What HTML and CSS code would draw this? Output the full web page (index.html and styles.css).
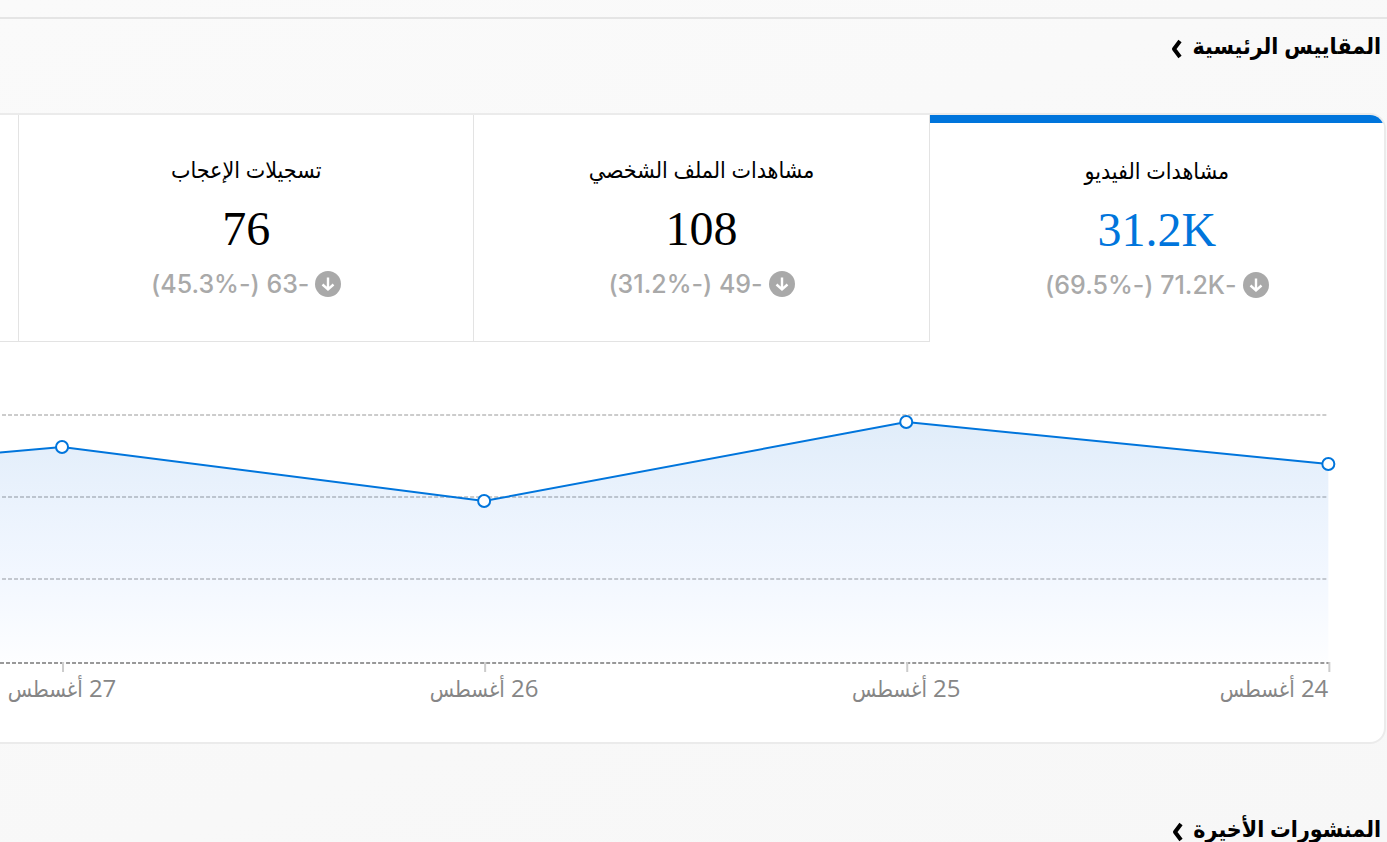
FILE: index.html
```
<!DOCTYPE html>
<html lang="ar" dir="rtl">
  <head>
    <meta charset="utf-8" />
    <meta name="viewport" content="width=device-width, initial-scale=1" />
    <title>المقاييس الرئيسية</title>
    <link rel="stylesheet" href="styles.css">
  </head>
  <body>
    <header class="topbar"></header>

    <main>
      <h2 class="section-title">
        <a href="#metrics">
          المقاييس الرئيسية
          <svg class="chevron" viewBox="0 0 12 20"><path d="M10 2 L4 10 L10 18" /></svg>
        </a>
      </h2>

      <section class="card" id="metrics">
        <div class="tabs">
          <button type="button" class="tab active">
            <span class="name">مشاهدات الفيديو</span>
            <span class="value">31.2K</span>
            <span class="change">
              <svg class="arrow" viewBox="0 0 26 26"><circle cx="13" cy="13" r="13" /><path d="M13 6.5 V18 M7.5 13.5 L13 18.5 L18.5 13.5" /></svg>
              <span>-71.2K&rlm; (-69.5%)</span>
            </span>
          </button>
          <button type="button" class="tab">
            <span class="name">مشاهدات الملف الشخصي</span>
            <span class="value">108</span>
            <span class="change">
              <svg class="arrow" viewBox="0 0 26 26"><circle cx="13" cy="13" r="13" /><path d="M13 6.5 V18 M7.5 13.5 L13 18.5 L18.5 13.5" /></svg>
              <span>-49 (-31.2%)</span>
            </span>
          </button>
          <button type="button" class="tab">
            <span class="name">تسجيلات الإعجاب</span>
            <span class="value">76</span>
            <span class="change">
              <svg class="arrow" viewBox="0 0 26 26"><circle cx="13" cy="13" r="13" /><path d="M13 6.5 V18 M7.5 13.5 L13 18.5 L18.5 13.5" /></svg>
              <span>-63 (-45.3%)</span>
            </span>
          </button>
          <button type="button" class="tab"></button>
        </div>

        <div class="chart">
          <svg viewBox="0 0 1328 370">
            <defs>
              <linearGradient id="fill" x1="0" y1="80" x2="0" y2="320" gradientUnits="userSpaceOnUse">
                <stop offset="0" stop-color="#0066d0" stop-opacity="0.12" />
                <stop offset="0.65" stop-color="#2f80ff" stop-opacity="0.06" />
                <stop offset="1" stop-color="#2f80ff" stop-opacity="0.01" />
              </linearGradient>
            </defs>
            <path class="grid" d="M2 73 H1326 M2 155 H1326 M2 237 H1326" />
            <path class="area" d="M-360 143 L62 105 L484 159 L906 80 L1328 122 V321 H-360 Z" />
            <path class="axis" d="M0 321 H1329" />
            <path class="ticks" d="M63 320 V330 M485 320 V330 M907 320 V330 M1329 320 V330" />
            <path class="line" d="M-360 143 L62 105 L484 159 L906 80 L1328 122" />
            <circle class="point" cx="62" cy="105" r="6" />
            <circle class="point" cx="484" cy="159" r="6" />
            <circle class="point" cx="906" cy="80" r="6" />
            <circle class="point" cx="1328" cy="122" r="6" />
            <text class="day" x="62" y="355">27 <tspan class="month">أغسطس</tspan></text>
            <text class="day" x="484" y="355">26 <tspan class="month">أغسطس</tspan></text>
            <text class="day" x="906" y="355">25 <tspan class="month">أغسطس</tspan></text>
            <text class="day first" x="1328" y="355">24 <tspan class="month">أغسطس</tspan></text>
          </svg>
        </div>
      </section>

      <h2 class="section-title">
        <a href="#posts">
          المنشورات الأخيرة
          <svg class="chevron" viewBox="0 0 12 20"><path d="M10 2 L4 10 L10 18" /></svg>
        </a>
      </h2>
    </main>
  </body>
</html>
```
FILE: styles.css
```
* {
  box-sizing: border-box;
}

html,
body {
  overflow: hidden;
}

body {
  margin: 0;
  height: 100vh;
  background: linear-gradient(160deg, #fafafa, #f7f7f7);
  color: #000;
  font-family: "Liberation Serif", "DejaVu Sans Condensed", "DejaVu Sans", serif;
}

.topbar {
  height: 19px;
  border-bottom: 2px solid #e5e5e5;
}

main {
  padding-right: 1px;
}

/* Section headings */
.section-title {
  margin: 0;
  padding: 8px 5px 46px 0;
  font-size: 23px;
  line-height: 40px;
}

.section-title a {
  display: flex;
  align-items: center;
  gap: 10px;
  width: fit-content;
  color: inherit;
  text-decoration: none;
}

.chevron {
  width: 12px;
  height: 20px;
  margin-top: 4px;
  fill: none;
  stroke: #000;
  stroke-width: 4;
  stroke-linejoin: round;
}

/* The card is wider than the window and runs off its left side */
.card {
  width: 131.6vw;
  margin-bottom: 58px;
  border: 2px solid #ebebeb;
  border-radius: 16px;
  background: #fff;
  overflow: hidden;
}

.tabs {
  display: grid;
  grid-template-columns: repeat(4, 1fr);
}

.tab {
  display: flex;
  flex-direction: column;
  align-items: center;
  min-height: 227px;
  padding: 36px 0 0;
  border: 0;
  border-left: 1px solid #e3e3e3;
  border-bottom: 1px solid #e3e3e3;
  background: #fff;
  color: #000;
  font-family: inherit;
}

.tab.active {
  padding-top: 37px;
  border-bottom: 0;
  box-shadow: inset 0 8px #0075dc;
}

.name {
  font-size: 23px;
  line-height: 40px;
}

.value {
  font-size: 48px;
  line-height: 76px;
}

.active .value {
  color: #0075dc;
}

.change {
  display: flex;
  align-items: center;
  gap: 6px;
  color: #a9a9a9;
  font-family: Inter, sans-serif;
  font-size: 25px;
  font-weight: 500;
  line-height: 34px;
}

.arrow {
  width: 26px;
  height: 26px;
}

.arrow circle {
  fill: #a9a9a9;
}

.arrow path {
  fill: none;
  stroke: #fff;
  stroke-width: 2.4;
}

/* Chart */
.chart {
  padding: 0 56px 30px 0;
}

.chart svg {
  display: block;
  width: 75.25%;
  overflow: visible;
}

.grid,
.axis {
  fill: none;
  stroke: #000;
  stroke-opacity: 0.2;
  stroke-width: 2;
  stroke-dasharray: 4 2;
}

.axis {
  stroke-opacity: 0.4;
}

.ticks {
  stroke: #ccc;
  stroke-width: 2;
}

.area {
  fill: url(#fill);
}

.line {
  fill: none;
  stroke: #0075dc;
  stroke-width: 2;
}

.point {
  fill: #fff;
  stroke: #0075dc;
  stroke-width: 2;
}

.day {
  fill: #868686;
  font-family: "Open Sans", "DejaVu Sans Condensed", "DejaVu Sans", sans-serif;
  font-size: 24px;
  text-anchor: middle;
}

.day.first {
  text-anchor: start;
}

.month {
  font-size: 22px;
}
```
